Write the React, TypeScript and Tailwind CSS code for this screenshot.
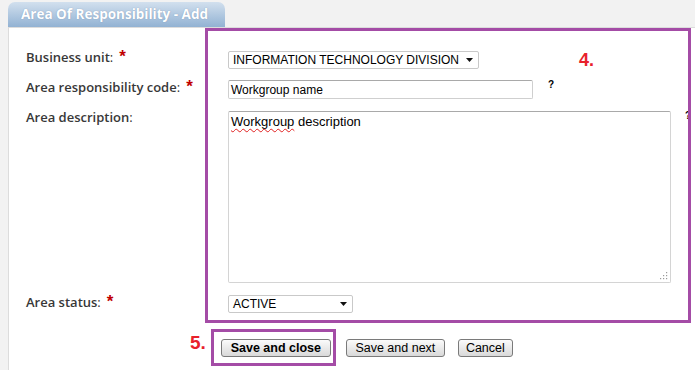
import React from 'react';

const LABEL = "font-['Open_Sans',sans-serif] text-[13px] leading-[18px] font-semibold text-[#383838] whitespace-nowrap";
const FIELD = "font-['Liberation_Sans',Arial,sans-serif] text-[12px] text-black";

function Label({ text, required }: { text: string; required?: boolean }) {
	return (
		<div className={`${LABEL} flex items-start h-[18px]`}>
			<span>{text}</span>
			<span className="font-normal">:</span>
			{required && (
				<span className="ml-[6px] font-['Liberation_Sans',Arial,sans-serif] font-bold text-[17px] leading-[18px] text-[#c00000]">
					*
				</span>
			)}
		</div>
	);
}

function Caret() {
	return (
		<svg width="7" height="4" viewBox="0 0 7 4" className="shrink-0">
			<path d="M0 0 H7 L3.5 4 Z" fill="#111" />
		</svg>
	);
}

function Select({ value, width }: { value: string; width: string }) {
	return (
		<div
			className={`${FIELD} ${width} h-[18px] flex items-center justify-between pl-[4px] pr-[5px] bg-white border border-[#c9c9c9] rounded-[2px]`}
		>
			<span className="whitespace-nowrap">{value}</span>
			<Caret />
		</div>
	);
}

function Help({ className = '' }: { className?: string }) {
	return (
		<div
			className={`shrink-0 font-['Liberation_Sans',Arial,sans-serif] text-[10px] leading-[10px] font-bold text-black ${className}`}
		>
			?
		</div>
	);
}

function Button({ label, width, bold }: { label: string; width: string; bold?: boolean }) {
	return (
		<button
			className={`${width} h-[18px] flex items-center justify-center font-['Liberation_Sans',Arial,sans-serif] text-[12.5px] leading-none text-black ${
				bold ? 'font-bold' : ''
			} bg-gradient-to-b from-[#fbfbfb] to-[#d9d9d9] border border-[#7a7a7a] rounded-[3px]`}
		>
			{label}
		</button>
	);
}

export default function App() {
	return (
		<div className="w-[695px] h-[370px] bg-[#f2f2f2] pt-[2px] overflow-hidden">
			{/* Tab header */}
			<div className="ml-2 w-[217px] h-[25px] rounded-t-[7px] bg-gradient-to-b from-[#d2e0ee] to-[#92b2d3] flex items-center pl-[13px]">
				<span className="font-['Open_Sans',sans-serif] text-[13.5px] font-bold text-white [text-shadow:0_0_1px_rgba(60,90,130,0.5)] whitespace-nowrap">
					Area Of Responsibility - Add
				</span>
			</div>

			{/* Panel */}
			<div className="ml-2 h-[343px] bg-white border-t border-l border-[#dcdcdc]">
				<div className="flex">
					{/* Labels */}
					<div className="w-[196px] shrink-0 pl-[17px] pt-[20px] flex flex-col">
						<Label text="Business unit" required />
						<div className="mt-[12px]">
							<Label text="Area responsibility code" required />
						</div>
						<div className="mt-[12px]">
							<Label text="Area description" />
						</div>
						<div className="mt-[167px]">
							<Label text="Area status" required />
						</div>
					</div>

					{/* Annotated fields */}
					<div className="w-[486px] h-[295px] border-[3px] border-[#a44ca6] overflow-hidden pl-[20px] pt-[20px] flex flex-col">
						<div className="flex items-start h-[18px]">
							<Select value="INFORMATION TECHNOLOGY DIVISION" width="w-[251px]" />
							<span className="ml-[100px] font-['Liberation_Sans',Arial,sans-serif] text-[18px] leading-[18px] font-bold text-[#e8212b]">
								4.
							</span>
						</div>
						<div className="mt-[11px] flex items-start h-[19px]">
							<div
								className={`${FIELD} text-[12.5px] w-[305px] h-[19px] flex items-center px-[2px] bg-white border border-[#cfcfcf] border-t-[#a9a9a9] rounded-[2px]`}
							>
								Workgroup name
							</div>
							<Help className="ml-[15px]" />
						</div>
						<div className="mt-[12px] flex items-start h-[172px]">
							<div
								className={`${FIELD} text-[13px] leading-[16px] relative shrink-0 w-[443px] h-[172px] px-[2px] pt-[2px] bg-white border border-[#d4d4d4] border-t-[#a9a9a9] rounded-[2px]`}
							>
								<span className="underline decoration-wavy decoration-[#e02020] decoration-1 underline-offset-[2px] [text-decoration-skip-ink:none]">
									Workgroup
								</span>{' '}
								description
								<svg width="8" height="8" viewBox="0 0 8 8" className="absolute right-[2px] bottom-[2px]">
									<g fill="#9a9a9a">
										<rect x="6" y="0" width="1.2" height="1.2" />
										<rect x="6" y="3" width="1.2" height="1.2" />
										<rect x="3" y="3" width="1.2" height="1.2" />
										<rect x="6" y="6" width="1.2" height="1.2" />
										<rect x="3" y="6" width="1.2" height="1.2" />
										<rect x="0" y="6" width="1.2" height="1.2" />
									</g>
								</svg>
							</div>
							<Help className="ml-[14px]" />
						</div>
						<div className="mt-[12px]">
							<Select value="ACTIVE" width="w-[125px]" />
						</div>
					</div>
				</div>

				{/* Actions */}
				<div className="flex items-start pl-[181px] mt-[6px]">
					<span className="mt-[4px] font-['Liberation_Sans',Arial,sans-serif] text-[19px] leading-[19px] font-bold text-[#e8212b]">
						5.
					</span>
					<div className="ml-[5px] w-[125px] h-[37px] border-[3px] border-[#a44ca6] pl-[7px] pt-[7px]">
						<Button label="Save and close" width="w-[110px]" bold />
					</div>
					<div className="ml-[10px] mt-[10px]">
						<Button label="Save and next" width="w-[99px]" />
					</div>
					<div className="ml-[13px] mt-[10px]">
						<Button label="Cancel" width="w-[55px]" />
					</div>
				</div>
			</div>
		</div>
	);
}
